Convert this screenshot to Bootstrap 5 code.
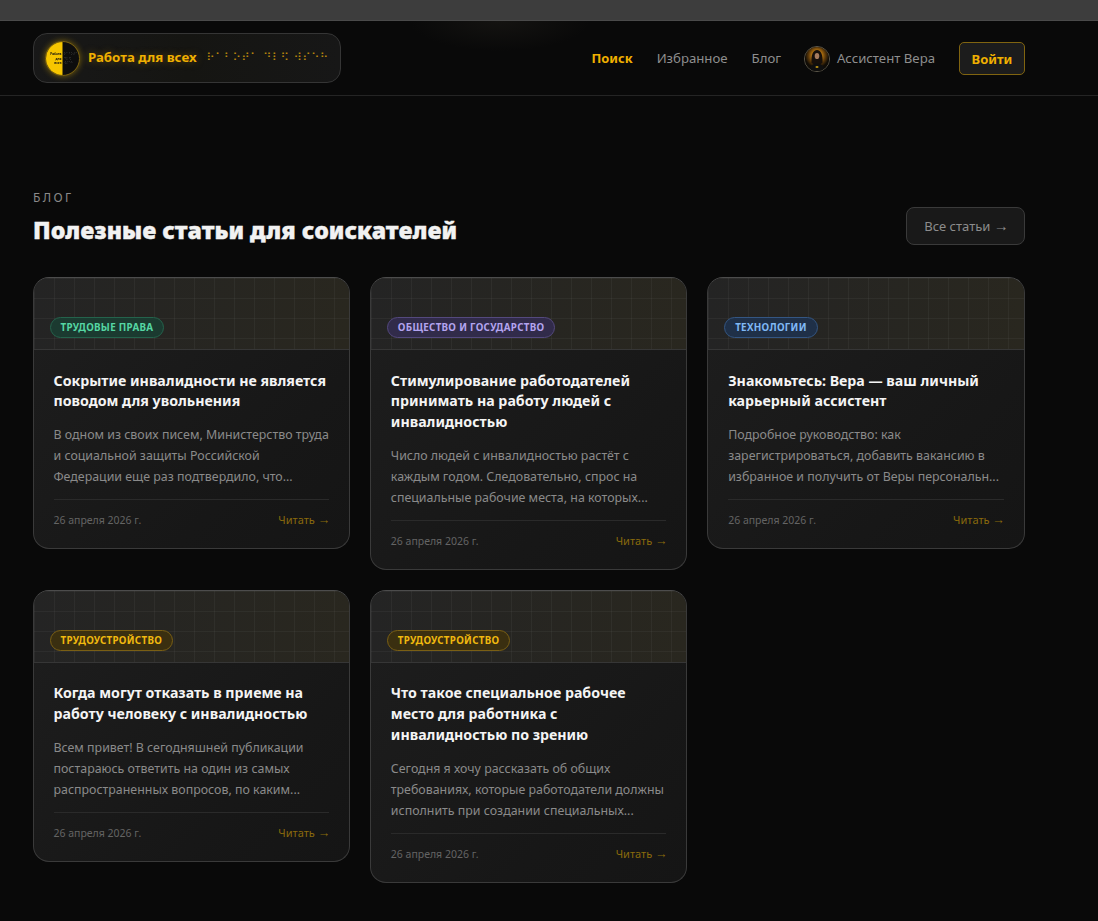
<!DOCTYPE html>
<html lang="ru">
<head>
<meta charset="utf-8">
<title>Блог</title>
<link href="https://cdn.jsdelivr.net/npm/bootstrap@5.3.0/dist/css/bootstrap.min.css" rel="stylesheet">
<style>
html,body{height:100%}
body{background:#090909;font-family:"Noto Sans","Open Sans","Liberation Sans",sans-serif;overflow:hidden;color:#ddd}
.top-strip{height:21px;background:#3d3d3d;border-bottom:1px solid #4a4a4a}
.site-head{height:75px;background:radial-gradient(ellipse 90px 30px at 500px 0,#141311,transparent),#090909;border-bottom:1px solid #242424;padding:12px 73px 0 33px}
.brand-pill{width:308px;height:50px;border:1px solid #353535;border-radius:14px;background:linear-gradient(90deg,#181818,#151512 50%,#171717);padding:0 11px;text-decoration:none}
.brand-mark{width:35px;height:35px;flex:none;filter:drop-shadow(0 0 3px rgba(255,200,0,.45))}
.brand-name{font-size:13.25px;font-weight:700;color:#f0b000;margin-left:8px;white-space:nowrap;text-shadow:0 0 8px rgba(240,176,0,.35)}
.brand-dots{font-family:"DejaVu Sans",sans-serif;font-size:11px;color:#b5840e;margin-left:10px;white-space:nowrap;letter-spacing:.7px}
.nav-item-link{font-size:13.2px;color:#8e8e8e;text-decoration:none;white-space:nowrap}
.nav-item-link.is-on{color:#f0b000;font-weight:700;font-size:12.9px}
.nav-tight{margin-right:23px}
.vera-link{gap:7px}
.nav-list{height:51px}
.vera-pic{width:26px;height:26px;flex:none}
.login-btn{font-size:13px;font-weight:700;color:#f0b000;background:#1c1c1c;border:1px solid #806410;border-radius:5px;width:66px;height:33px;padding:0;line-height:30px}
.login-btn:hover{color:#f0b000;background:#1c1c1c;border-color:#806410}
.blog-wrap{padding:95px 73px 0 33px}
.blog-kicker{font-size:12px;letter-spacing:2.4px;color:#8a8a8a;line-height:14px}
.blog-title{font-size:23.2px;font-weight:900;color:#f2f2f2;line-height:30px;margin:10px 0 0;-webkit-text-stroke:.35px #f2f2f2}
.all-btn{font-size:13px;color:#8c8c8c;background:#191919;border:1px solid #3a3a3a;border-radius:8px;width:119px;height:38px;padding:0 0 0 2px;line-height:36px}
.all-btn:hover{color:#8c8c8c;background:#191919;border-color:#3a3a3a}
.arrow-glyph{font-family:"Liberation Sans",sans-serif;font-size:1.15em;line-height:1}
.post-grid{grid-template-columns:repeat(3,1fr);gap:20px;align-items:start;margin:32px 0 0 -.5px;width:992px}
.post-card{background:linear-gradient(135deg,#1e1e1e,#171717 70%,#151515);border:1px solid #3a3a3a;border-top-color:#4c4c4c;border-radius:16px;overflow:hidden;color:inherit}
.post-cover{height:72px;position:relative;background-color:#262626;background-image:linear-gradient(rgba(255,255,255,.04) 1px,transparent 1px),linear-gradient(90deg,rgba(255,255,255,.04) 1px,transparent 1px),linear-gradient(90deg,#242424,#29271f);background-size:20px 20px,20px 20px,100% 100%;border-bottom:1px solid #363636}
.post-tag{position:absolute;left:16px;top:39px;height:21px;border-radius:11px;padding:0 10px;font-size:9.800px;font-weight:700;line-height:19px;letter-spacing:.3px;white-space:nowrap;border:1px solid}
.tag-green{color:#55d6a3;background:#1b3a30;border-color:#24634c}
.tag-violet{color:#b3a4ef;background:#312b4a;border-color:#54497e}
.tag-blue{color:#7fb8f5;background:#1f3048;border-color:#345683}
.tag-gold{color:#f0b90f;background:#3a2f10;border-color:#7a5f14}
.post-body{padding:20.5px 20px 0}
.post-name{font-size:14.2px;font-weight:700;line-height:20.6px;color:#f4f4f4;margin:0 0 12.3px}
.post-text{font-size:12.4px;line-height:21px;color:#8a8a8a;margin:0 0 12px}
.post-foot{border-top:1px solid #2a2a2a;height:49.4px;padding-top:12px}
.post-date{font-size:10.5px;color:#646464;margin-top:1px}
.post-more{font-size:11px;color:#8a6a0c;text-decoration:none;margin-right:-1.5px;padding-top:.5px}
</style>
</head>
<body>
<div class="top-strip"></div>
<header class="site-head d-flex justify-content-between">
  <a class="brand-pill d-flex align-items-center" href="#">
    <svg class="brand-mark" viewBox="0 0 35 35" aria-hidden="true">
      <circle cx="17.5" cy="17.5" r="17" fill="#0d0d0d" stroke="#7d6310"/>
      <path d="M17.5 1a16.5 16.5 0 0 0 0 33z" fill="#f7c600"/>
      <text x="16.5" y="14" text-anchor="end" font-size="3.2" font-weight="700" fill="#111" font-family="Noto Sans">Работа</text>
      <text x="16.5" y="18.5" text-anchor="end" font-size="3.2" font-weight="700" fill="#111" font-family="Noto Sans">для</text>
      <text x="16.5" y="23" text-anchor="end" font-size="3.2" font-weight="700" fill="#111" font-family="Noto Sans">всех</text>
      <text x="19" y="14" font-size="3.2" fill="#777" font-family="DejaVu Sans">⠗⠁⠃⠕⠞⠁</text>
      <text x="19" y="18.5" font-size="3.2" fill="#777" font-family="DejaVu Sans">⠙⠇⠫</text>
      <text x="19" y="23" font-size="3.2" fill="#777" font-family="DejaVu Sans">⠺⠎⠑⠓</text>
    </svg>
    <span class="brand-name">Работа для всех</span>
    <span class="brand-dots">⠗⠁⠃⠕⠞⠁ ⠙⠇⠫ ⠺⠎⠑⠓</span>
  </a>
  <nav class="nav-list d-flex align-items-center">
    <a class="nav-item-link is-on me-4" href="#">Поиск</a>
    <a class="nav-item-link me-4" href="#">Избранное</a>
    <a class="nav-item-link nav-tight" href="#">Блог</a>
    <a class="nav-item-link d-flex align-items-center vera-link me-4" href="#">
      <svg class="vera-pic" viewBox="0 0 26 26" aria-hidden="true">
        <defs>
          <clipPath id="vc"><circle cx="13" cy="13" r="12"/></clipPath>
          <radialGradient id="vg" cx=".5" cy=".36" r=".5"><stop offset=".3" stop-color="#d98c12"/><stop offset=".7" stop-color="#5c390a"/><stop offset="1" stop-color="#100c06"/></radialGradient>
        </defs>
        <circle cx="13" cy="13" r="12.5" fill="#0e0d0a" stroke="#5f5a4c"/>
        <g clip-path="url(#vc)">
          <rect x="1" y="1" width="24" height="24" fill="url(#vg)"/>
          <path d="M7.500 17C7 9 9 4 13 4s6 5 5.500 13l-2.500 1.500h-6z" fill="#17100b"/>
          <ellipse cx="13" cy="10" rx="2.300" ry="3.100" fill="#a87c5e"/>
          <path d="M5 26c0-5.500 3.500-8.500 8-8.500s8 3 8 8.500z" fill="#0f0f0f"/>
          <rect x="11.700" y="20" width="2.600" height="2" fill="#a88514"/>
        </g>
      </svg>
      <span>Ассистент Вера</span>
    </a>
    <button class="btn login-btn" type="button">Войти</button>
  </nav>
</header>
<main class="blog-wrap">
  <div class="d-flex justify-content-between align-items-end">
    <div>
      <div class="blog-kicker">БЛОГ</div>
      <h1 class="blog-title">Полезные статьи для соискателей</h1>
    </div>
    <button class="btn all-btn" type="button">Все статьи <span class="arrow-glyph">→</span></button>
  </div>
  <div class="d-grid post-grid">
    <article class="card post-card">
      <div class="post-cover"><span class="post-tag tag-green">ТРУДОВЫЕ ПРАВА</span></div>
      <div class="post-body">
        <h2 class="post-name">Сокрытие инвалидности не является поводом для увольнения</h2>
        <p class="post-text">В одном из своих писем, Министерство труда и социальной защиты Российской Федерации еще раз подтвердило, что...</p>
        <div class="post-foot d-flex justify-content-between align-items-start"><span class="post-date">26 апреля 2026 г.</span><a class="post-more" href="#">Читать <span class="arrow-glyph">→</span></a></div>
      </div>
    </article>
    <article class="card post-card">
      <div class="post-cover"><span class="post-tag tag-violet">ОБЩЕСТВО И ГОСУДАРСТВО</span></div>
      <div class="post-body">
        <h2 class="post-name">Стимулирование работодателей принимать на работу людей с инвалидностью</h2>
        <p class="post-text">Число людей с инвалидностью растёт с каждым годом. Следовательно, спрос на специальные рабочие места, на которых...</p>
        <div class="post-foot d-flex justify-content-between align-items-start"><span class="post-date">26 апреля 2026 г.</span><a class="post-more" href="#">Читать <span class="arrow-glyph">→</span></a></div>
      </div>
    </article>
    <article class="card post-card">
      <div class="post-cover"><span class="post-tag tag-blue">ТЕХНОЛОГИИ</span></div>
      <div class="post-body">
        <h2 class="post-name">Знакомьтесь: Вера — ваш личный карьерный ассистент</h2>
        <p class="post-text">Подробное руководство: как зарегистрироваться, добавить вакансию в избранное и получить от Веры персональн...</p>
        <div class="post-foot d-flex justify-content-between align-items-start"><span class="post-date">26 апреля 2026 г.</span><a class="post-more" href="#">Читать <span class="arrow-glyph">→</span></a></div>
      </div>
    </article>
    <article class="card post-card">
      <div class="post-cover"><span class="post-tag tag-gold">ТРУДОУСТРОЙСТВО</span></div>
      <div class="post-body">
        <h2 class="post-name">Когда могут отказать в приеме на работу человеку с инвалидностью</h2>
        <p class="post-text">Всем привет! В сегодняшней публикации постараюсь ответить на один из самых распространенных вопросов, по каким...</p>
        <div class="post-foot d-flex justify-content-between align-items-start"><span class="post-date">26 апреля 2026 г.</span><a class="post-more" href="#">Читать <span class="arrow-glyph">→</span></a></div>
      </div>
    </article>
    <article class="card post-card">
      <div class="post-cover"><span class="post-tag tag-gold">ТРУДОУСТРОЙСТВО</span></div>
      <div class="post-body">
        <h2 class="post-name">Что такое специальное рабочее место для работника с инвалидностью по зрению</h2>
        <p class="post-text">Сегодня я хочу рассказать об общих требованиях, которые работодатели должны исполнить при создании специальных...</p>
        <div class="post-foot d-flex justify-content-between align-items-start"><span class="post-date">26 апреля 2026 г.</span><a class="post-more" href="#">Читать <span class="arrow-glyph">→</span></a></div>
      </div>
    </article>
  </div>
</main>
<script src="https://cdn.jsdelivr.net/npm/bootstrap@5.3.0/dist/js/bootstrap.bundle.min.js"></script>
</body>
</html>
